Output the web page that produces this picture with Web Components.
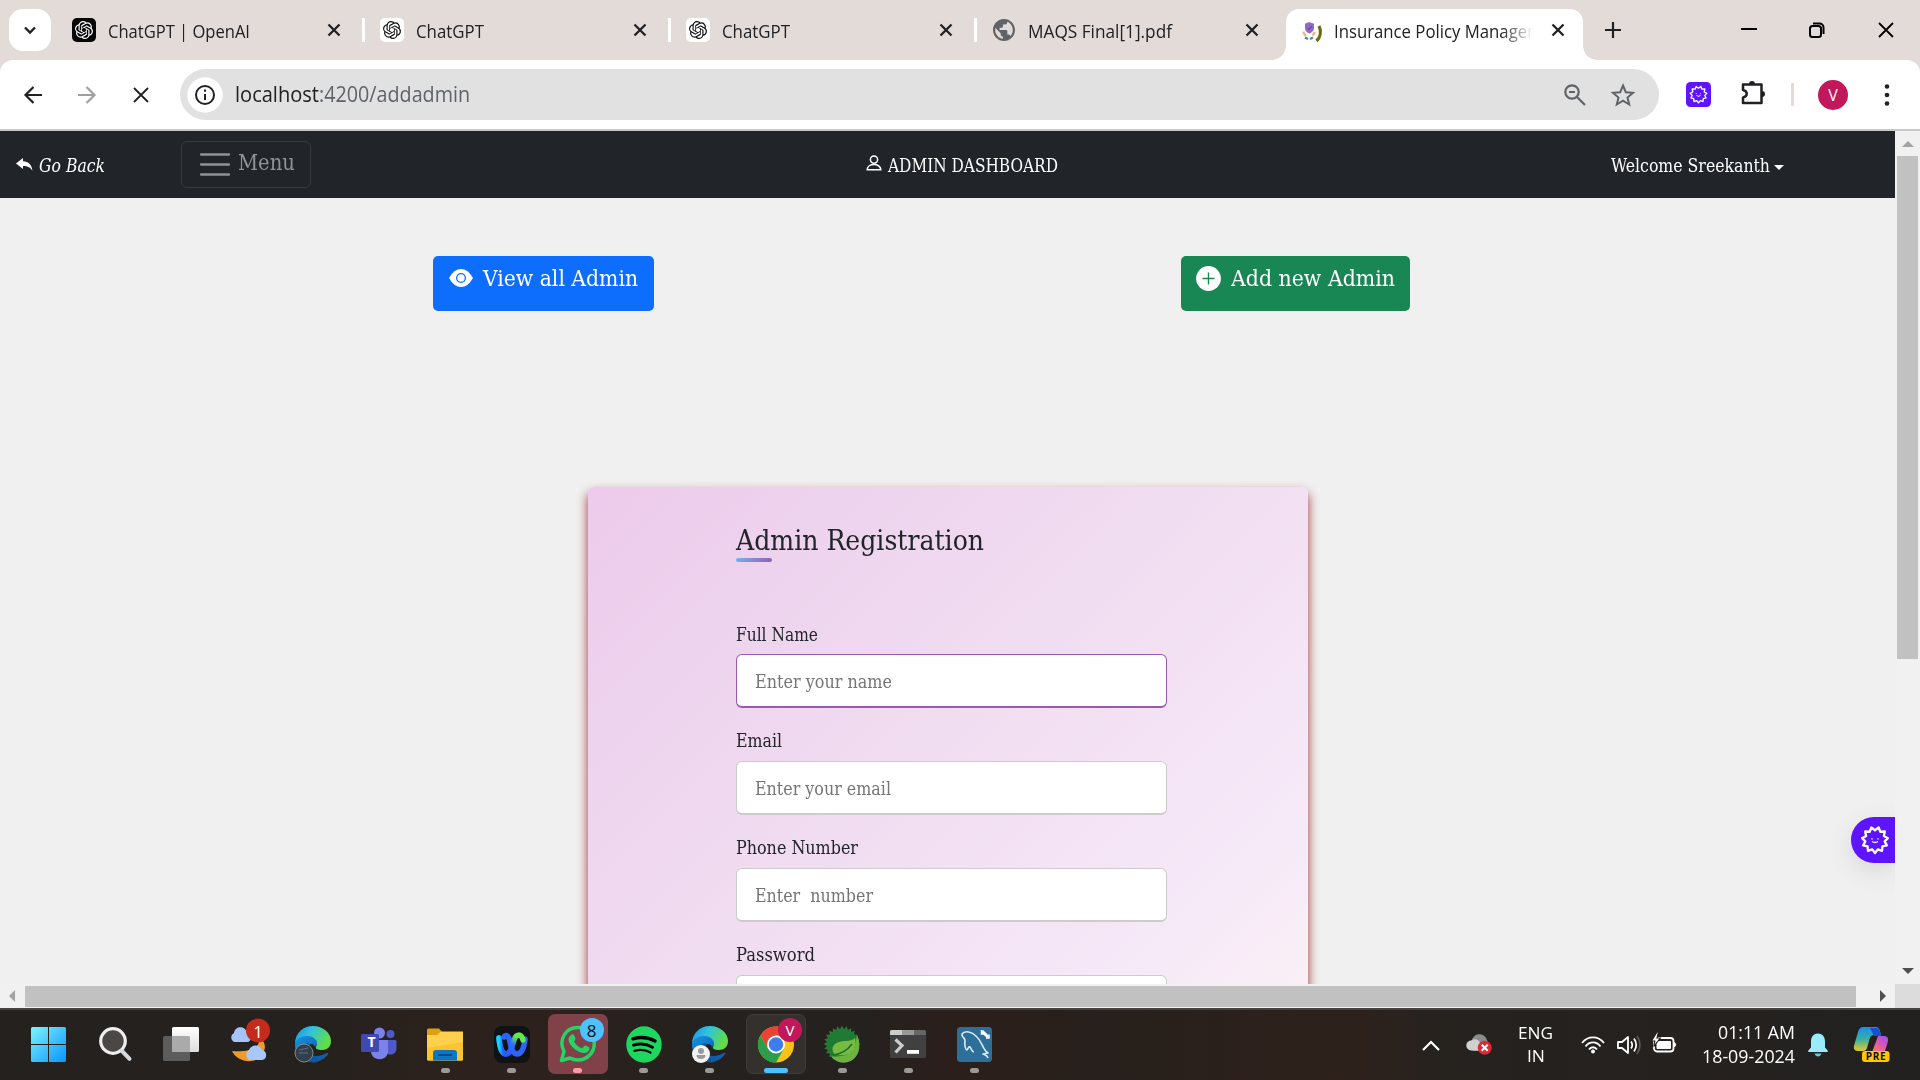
<!DOCTYPE html>
<html lang="en">
<head>
<meta charset="utf-8">
<title>Insurance Policy Management</title>
<style>
html,body{margin:0;padding:0;width:1920px;height:1080px;overflow:hidden;background:#f0f0f0}
desktop-screen{display:block}
</style>
</head>
<body>
<desktop-screen></desktop-screen>
<script>
const wavy = (n, cx, cy, ro, ri, rot = 0) => {
  const p = [];
  for (let i = 0; i < n * 2; i++) {
    const a = rot + Math.PI * i / n, r = i % 2 ? ri : ro;
    p.push((cx + r * Math.sin(a)).toFixed(2) + ' ' + (cy - r * Math.cos(a)).toFixed(2));
  }
  return 'M' + p.join('L') + 'Z';
};
const OPENAI = 'M22.2819 9.8211a5.9847 5.9847 0 0 0-.5157-4.9108 6.0462 6.0462 0 0 0-6.5098-2.9A6.0651 6.0651 0 0 0 4.9807 4.1818a5.9847 5.9847 0 0 0-3.9977 2.9 6.0462 6.0462 0 0 0 .7427 7.0966 5.98 5.98 0 0 0 .511 4.9107 6.051 6.051 0 0 0 6.5146 2.9001A5.9847 5.9847 0 0 0 13.2599 24a6.0557 6.0557 0 0 0 5.7718-4.2058 5.9894 5.9894 0 0 0 3.9977-2.9001 6.0557 6.0557 0 0 0-.7475-7.0729zm-9.022 12.6081a4.4755 4.4755 0 0 1-2.8764-1.0408l.1419-.0804 4.7783-2.7582a.7948.7948 0 0 0 .3927-.6813v-6.7369l2.02 1.1686a.071.071 0 0 1 .038.052v5.5826a4.504 4.504 0 0 1-4.4945 4.4944zm-9.6607-4.1254a4.4708 4.4708 0 0 1-.5346-3.0137l.142.0852 4.783 2.7582a.7712.7712 0 0 0 .7806 0l5.8428-3.3685v2.3324a.0804.0804 0 0 1-.0332.0615L9.74 19.9502a4.4992 4.4992 0 0 1-6.1408-1.6464zM2.3408 7.8956a4.485 4.485 0 0 1 2.3655-1.9728V11.6a.7664.7664 0 0 0 .3879.6765l5.8144 3.3543-2.0201 1.1685a.0757.0757 0 0 1-.071 0l-4.8303-2.7865A4.504 4.504 0 0 1 2.3408 7.872zm16.5963 3.8558L13.1038 8.364 15.1192 7.2a.0757.0757 0 0 1 .071 0l4.8303 2.7913a4.4944 4.4944 0 0 1-.6765 8.1042v-5.6772a.79.79 0 0 0-.407-.667zm2.0107-3.0231l-.142-.0852-4.7735-2.7818a.7759.7759 0 0 0-.7854 0L9.409 9.2297V6.8974a.0662.0662 0 0 1 .0284-.0615l4.8303-2.7866a4.4992 4.4992 0 0 1 6.6802 4.66zM8.3065 12.863l-2.02-1.1638a.0804.0804 0 0 1-.038-.0567V6.0742a4.4992 4.4992 0 0 1 7.3757-3.4537l-.142.0805L8.704 5.459a.7948.7948 0 0 0-.3927.6813zm1.0976-2.3654l2.602-1.4998 2.6069 1.4998v2.9994l-2.5974 1.4997-2.6067-1.4997Z';
const edge = `<defs><linearGradient id="ea" x1="0" y1="0" x2="1" y2=".4"><stop offset="0" stop-color="#1b8fe0"/><stop offset=".45" stop-color="#2fc2df"/><stop offset="1" stop-color="#62dc45"/></linearGradient><linearGradient id="eb" x1="0" y1="0" x2=".6" y2="1"><stop offset="0" stop-color="#1795e0"/><stop offset="1" stop-color="#0b60b8"/></linearGradient><linearGradient id="ec" x1="0" y1="0" x2="1" y2="0"><stop offset="0" stop-color="#0b4f97"/><stop offset="1" stop-color="#1763ae"/></linearGradient></defs>
<path fill="url(#eb)" d="M0 19C0 13 5 9 12 9c6 0 10 4 10 8 0 1-1 3-2 4-1-3-4-4-6-2-5 5 0 14 8 17-3 1-7 0-10-1C4 32 0 26 0 19z"/>
<path fill="url(#ec)" d="M14 18c-4 6 0 12 7 12 5 0 8-2 11-3 1 0 2 0 1 1-4 6-11 9-17 8-8-3-10-12-6-17 1-2 3-3 4-1z"/>
<path fill="url(#ea)" d="M0 18C0 7 8 0 18 0s18 7 18 15c0 6-4 9-9 9-4 0-7-1-6-3 3-5-1-11-9-11C6 10 1 13 0 18z"/>`;
const ICONS = {
  chevdown: [12, 8, '<path d="M1 1.500 6 6.500l5-5" fill="none" stroke="currentColor" stroke-width="2.400"/>'],
  x: [14, 14, '<path d="M1.500 1.500 12.500 12.500M12.500 1.500 1.500 12.500" fill="none" stroke="currentColor" stroke-width="2.300"/>'],
  winx: [16, 16, '<path d="M1 1 15 15M15 1 1 15" fill="none" stroke="currentColor" stroke-width="1.800"/>'],
  openaiDark: [24, 24, `<rect width="24" height="24" rx="5" fill="#050605"/><g transform="translate(3 3) scale(.75)"><path fill="#fff" d="${OPENAI}"/></g>`],
  openai: [24, 24, `<rect width="24" height="24" rx="5" fill="#fff"/><g transform="translate(3 3) scale(.75)"><path fill="#111" d="${OPENAI}"/></g>`],
  globe: [22, 22, '<g transform="translate(-2.2 -2.2) scale(1.1)"><path fill="#5f6368" d="M12 2C6.480 2 2 6.480 2 12s4.480 10 10 10 10-4.480 10-10S17.520 2 12 2zm-1 17.930c-3.950-.490-7-3.850-7-7.930 0-.620.080-1.210.210-1.790L9 15v1c0 1.100.900 2 2 2v1.930zm6.900-2.540c-.260-.810-1-1.390-1.900-1.390h-1v-3c0-.550-.450-1-1-1H8v-2h2c.550 0 1-.450 1-1V7h2c1.100 0 2-.900 2-2v-.410c2.930 1.190 5 4.060 5 7.410 0 2.080-.800 3.970-2.100 5.390z"/></g>'],
  policy: [20, 20, '<path fill="#9668c0" d="M7 0l5 1.700v4C12 9 9.500 10.500 7.500 11.400 5 10.500 3 9 3 5.700v-4z"/><path d="M5.500 6l1.500 1.700L9.700 4" stroke="#5b3c86" fill="none"/><path d="M1 10l3 4M13 10l-2.500 3.500" stroke="#f0b37d" stroke-width="2.200" fill="none"/><path d="M3 15.500l3 1.500M8 17l3-1.500" stroke="#3c8fa8" stroke-width="2.200"/><path d="M17 4c2.500 5 1.500 11-2.500 15" stroke="#6d6a12" stroke-width="3.200" fill="none"/>'],
  plus: [16, 16, '<path d="M8 0v16M0 8h16" stroke="currentColor" stroke-width="2.200"/>'],
  minus: [16, 2, '<path d="M0 1h16" stroke="currentColor" stroke-width="2"/>'],
  restore: [16, 16, '<rect x="1" y="4" width="11" height="11" rx="2.500" fill="none" stroke="currentColor" stroke-width="2"/><path d="M4 1.500h6.500a4 4 0 0 1 4 4V12" fill="none" stroke="currentColor" stroke-width="2"/>'],
  back: [18, 18, '<path d="M18 9H2M9.500 1 1.500 9l8 8" fill="none" stroke="currentColor" stroke-width="2.200"/>'],
  fwd: [18, 18, '<path d="M0 9h16M8.500 1l8 8-8 8" fill="none" stroke="currentColor" stroke-width="2.200"/>'],
  info: [36, 36, '<circle cx="18" cy="18" r="17.700" fill="#fff"/><circle cx="18" cy="18" r="9" fill="none" stroke="#202124" stroke-width="2"/><path d="M18 17v6M18 12.500v2.200" stroke="#202124" stroke-width="2"/>'],
  zoomout: [22, 22, '<circle cx="8" cy="8" r="6.700" fill="none" stroke="currentColor" stroke-width="2.200"/><path d="M13 13l8 8M5 8h6" stroke="currentColor" stroke-width="2.200"/>'],
  star: [24, 24, '<path d="M12 2.500l2.800 6.700 7.200.6-5.500 4.700 1.700 7-6.200-3.800-6.200 3.800 1.700-7L2 9.800l7.200-.6z" fill="none" stroke="currentColor" stroke-width="2"/>'],
  ext: [25, 25, `<rect width="25" height="25" rx="4.500" fill="#5f14ff"/><path d="${wavy(11, 12.5, 12.5, 8.4, 6.3, Math.PI / 11)}" fill="none" stroke="#fff" stroke-width="1.300" stroke-linejoin="round"/><path d="M10.300 11.300v.800M14.700 11.300v.800M10.500 13.500q2 1.600 4 0" fill="none" stroke="#fff"/>`],
  gearface: [28, 28, `<path d="${wavy(11, 14, 14, 13, 9.8, Math.PI / 11)}" fill="none" stroke="#fff" stroke-width="2.300" stroke-linejoin="round"/><path d="M11 12.300v1.200M17 12.300v1.200M11 15.500q3 2 6 0" fill="none" stroke="#fff" stroke-width="1.300"/>`],
  puzzle: [26, 26, '<path d="M2 4.500h18.500v18.500H2v-5.500c5-1 5-6.500 0-7.500z" fill="none" stroke="currentColor" stroke-width="2.500" stroke-linejoin="round"/><path d="M8 4a3 3 0 0 1 6 0zM21 11a3 3 0 0 1 0 6z" fill="currentColor"/>'],
  dots: [6, 22, '<circle cx="3" cy="2.500" r="2.300"/><circle cx="3" cy="11" r="2.300"/><circle cx="3" cy="19.500" r="2.300"/>'],
  reply: [17, 13, '<path fill="#fff" d="M0 5.500 7 0v3.300c5.500.2 8.500 3 9.500 9.500C14.500 9.200 12 8 7 7.900V11z"/>'],
  burger: [30, 23, '<path d="M1 1.500h28M1 11.500h28M1 21.500h28" stroke="#909294" stroke-width="2.300" stroke-linecap="round"/>'],
  user: [16, 16, '<circle cx="8" cy="4.600" r="3.600" fill="none" stroke="#fff" stroke-width="1.500"/><path d="M1.200 14.800c0-7 13.600-7 13.600 0z" fill="none" stroke="#fff" stroke-width="1.600"/>'],
  eye: [24, 18, '<path fill="#fff" d="M0 9Q5 0 12 0t12 9q-5 9-12 9T0 9z"/><circle cx="12" cy="9" r="5" fill="#0d6efd"/><circle cx="12" cy="9" r="3.700" fill="#fff"/>'],
  pluscircle: [25, 25, '<circle cx="12.500" cy="12.500" r="12.400" fill="#fff"/><path d="M12.500 6.500v12M6.500 12.500h12" stroke="#198754" stroke-width="1.400"/>'],
  start: [35, 35, '<defs><linearGradient id="s" x1="0" y1="0" x2="1" y2="1"><stop offset="0" stop-color="#7df3fd"/><stop offset="1" stop-color="#0a94ff"/></linearGradient></defs><path fill="url(#s)" d="M1.500 0H17v17H0V1.500Q0 0 1.500 0zM18 0h15.500Q35 0 35 1.500V17H18zM0 18h17v17H1.500Q0 35 0 33.500zM18 18h17v15.500q0 1.500-1.500 1.500H18z"/>'],
  search: [33, 34, '<circle cx="14" cy="14" r="12.300" fill="#4b4745" stroke="#eceeef" stroke-width="3.200"/><path d="M23 24l7.500 7.800" stroke="#d5dae0" stroke-width="4" stroke-linecap="round"/>'],
  taskview: [36, 34, '<defs><linearGradient id="tv" x1="0" y1="0" x2="0" y2="1"><stop offset="0" stop-color="#fff"/><stop offset="1" stop-color="#ddd"/></linearGradient></defs><rect x="0" y="9" width="27" height="25" rx="1.500" fill="#5c5c5c"/><rect x="9" y="0" width="27" height="25" rx="1.500" fill="url(#tv)"/><path fill="#aaa" d="M9 9h16.500q1.500 0 1.500 1.500V25H9z"/>'],
  weather: [40, 42, '<path d="M30 22c-2 8-14 10-27 9 5 11 24 15 31 2 3-5 2-9 0-12z" fill="#f09a2c"/><path d="M5 22a5 5 0 0 1 0-9c1-7 11-8 13 0 5 1 5 9 0 9z" fill="#a5c4f7"/><path d="M20 40a6 6 0 0 1 0-10c2-6 11-6 13 0 6 1 5 10 0 10z" fill="#a9c8fa"/><circle cx="29" cy="10.500" r="12" fill="#c42b1c"/>'],
  edge1: [36, 36, edge + '<circle cx="9" cy="27" r="9" fill="#30404d" stroke="#9a9a9a" stroke-width=".800"/><path d="M4 24l9-2M4 27h9" stroke="#5f7080" stroke-width="1"/>'],
  edge2: [36, 36, edge + '<circle cx="9" cy="28" r="9" fill="#f3f3f3"/><circle cx="9" cy="25" r="3" fill="#999"/><path d="M4.500 29h9q0 4-4.500 4t-4.500-4z" fill="#999"/>'],
  teams: [36, 34, '<circle cx="18.500" cy="6" r="5.500" fill="#7b83eb"/><circle cx="29.500" cy="7" r="4" fill="#5059c9"/><path d="M25 13h9q1.500 0 1.500 1.500V21c0 7-7 8-10.500 5z" fill="#5059c9"/><path d="M10 13h17v11c0 11-17 11-17 0z" fill="#7b83eb"/><rect y="7" width="18" height="18" rx="1.500" fill="#4049ae"/>'],
  folder: [36, 33, '<path d="M0 2q0-1.500 1.500-1.500H12L16 5v8H0z" fill="#dba20c"/><path d="M0 7h10l4-3.500h22V31q0 1.500-1.500 1.500h-33Q0 32.500 0 31z" fill="#ffd04b"/><path d="M0 20L36 14V31q0 1.500-1.500 1.500h-33Q0 32.500 0 31z" fill="#fbc52f"/><path d="M6 32.500V25q0-3 3-3h18q3 0 3 3v7.500z" fill="#0e74c4"/><path d="M11 27h14" stroke="#0a4883" stroke-width="1.800"/>'],
  webex: [36, 37, '<defs><linearGradient id="w1" x1="0" x2="1" y1="0" y2="0"><stop offset="0" stop-color="#11d8ff"/><stop offset=".7" stop-color="#275cff"/></linearGradient><linearGradient id="w2" x1="0" x2="1" y1="1" y2="0"><stop offset="0" stop-color="#244fff"/><stop offset=".55" stop-color="#3171ff"/><stop offset=".8" stop-color="#5fe94a"/></linearGradient></defs><rect width="36" height="37" rx="8" fill="#111213"/><path d="M31 13c-1 10-4 15-8 15s-6-6-7-12-4-8-6-5" stroke="#2f62ff" stroke-width="5.500" fill="none" stroke-linecap="round"/><path d="M5 12c1 10 3 16 7 16 5 0 6-8 8-14s7-7 9 0" stroke="url(#w2)" stroke-width="5.500" fill="none" stroke-linecap="round"/><path d="M5 12c.6 8 2.500 15 6 15.800" stroke="url(#w1)" stroke-width="5.500" fill="none" stroke-linecap="round"/>'],
  whatsapp: [38, 38, '<path d="M2.500 35.500l2.500-9C-1 14 7 2.500 19 2.500a16 16 0 0 1 0 32.500c-3 0-5.500-.6-8-2z" fill="none" stroke="#25d366" stroke-width="3.500" stroke-linejoin="round"/><path d="M12 10c1-1 2.500-1 3 0l1.500 3.500q.3 1-1.500 3c2 3.500 4.500 5.500 8 7l2.200-2.500q.8-.8 1.800-.3l3.300 1.800c1 .7-.3 5.500-5 5.500C18 28 9 19.500 9.500 14q.5-2.600 2.500-4z" fill="#25d366"/>'],
  spotify: [36, 37, '<ellipse cx="18" cy="18.500" rx="17.700" ry="18.200" fill="#1ed760"/><path d="M7 12.800q11.500-3.500 22 2.200" stroke="#000" stroke-width="3.500" fill="none" stroke-linecap="round"/><path d="M7.500 19.200q10-3 19 2" stroke="#000" stroke-width="2.900" fill="none" stroke-linecap="round"/><path d="M8.500 24.800q8.500-2.300 16 1.700" stroke="#000" stroke-width="2.300" fill="none" stroke-linecap="round"/>'],
  chrome: [36, 37, '<g transform="translate(18 18.500)"><circle r="18" fill="#fbc116"/><path d="M0-9H15.600A18 18 0 0 0-15.600-9L-7.800 4.500z" fill="#ea4335"/><path d="M-15.600-9A18 18 0 0 0 0 18L7.800 4.500H-7.800z" fill="#2b9e4b"/><circle r="9" fill="#fff"/><circle r="7.200" fill="#3c7df0"/></g>'],
  spring: [36, 38, `<path d="${wavy(24, 18, 19, 18.3, 15, 0)}" fill="#2e7d32"/><circle cx="19" cy="20" r="16" fill="#1e7a35"/><path d="M33 10c5 11 2 24-9 27-7 2-14-1-17-6 10 2 21-2 24-10z" fill="#6db33f"/><path d="M31 13c3 12-6 19-20 17C4 20 14 16 22 16q6 0 9-3z" fill="#77bc3f"/><path d="M9 30c8-1 14-4 19-11" stroke="#1e6d32" fill="none" stroke-width="1.500"/>`],
  terminal: [36, 28, '<rect width="36" height="28" rx="1.500" fill="#404040"/><path fill="#ccc" d="M1.500 0H12v5H0V1.500Q0 0 1.500 0z"/><path fill="#999" d="M12 0h12v5H12z"/><path fill="#666" d="M24 0h10.500Q36 0 36 1.500V5H24z"/><path d="M5.500 9.500l6.500 6-6.500 7" fill="none" stroke="#ccc" stroke-width="3.200"/><path fill="#fff" d="M17 20h12v3.800H17z"/>'],
  mysql: [35, 35, '<rect width="35" height="35" rx="3.500" fill="#2d6f99"/><path d="M31 31c-1-3-3-3-5-4l5-1c-6-4-5-11-12-17C15 5 8 3 5 7c-1 3 3 3 3 7-1 5 1 9 2 9s1-4 3-3c2 3 2 5 4 5" fill="none" stroke="#dcebf5" stroke-width="1.600" stroke-linejoin="round"/><path d="M25 4l6 6" stroke="#fff" stroke-width="3"/><path d="M24.500 3v4h3M32 7.500V11h-3" fill="none" stroke="#fff" stroke-width="1.500"/>'],
  chevup: [18, 11, '<path d="M1 10l8-8 8 8" fill="none" stroke="#fff" stroke-width="2.200"/>'],
  cloud: [26, 22, '<path d="M4 15a5 5 0 0 1 1-9c2-7 12-8 15 0l3 7-10 4H6z" fill="#8b8b8b"/><path d="M4 16.500a5 5 0 0 1 .5-10c4-3 8 0 9 3l3 2v5z" fill="#d0d0d0"/><circle cx="17.700" cy="13.700" r="7" fill="#dc2b36"/><path d="M14.700 10.700l6 6m0-6l-6 6" stroke="#fff" stroke-width="2"/>'],
  wifi: [24, 18, '<g fill="none" stroke="#fff" stroke-width="1.800"><path d="M1 7C7-.5 17-.5 23 7M4.500 10.500c4-5.500 11-5.500 15 0M8 13.500c2-3 6-3 8 0"/></g><circle cx="12" cy="15.500" r="2" fill="#fff"/>'],
  sound: [24, 20, '<path d="M1 7h4l6-5v16l-6-5H1z" fill="none" stroke="#fff" stroke-width="1.800" stroke-linejoin="round"/><path d="M14 6.500q2.500 3.500 0 7M17 3.500q4.500 6.500 0 13" fill="none" stroke="#fff" stroke-width="1.700"/><path d="M20 1q6 9 0 18" fill="none" stroke="#5b5755" stroke-width="1.700"/>'],
  battery: [26, 20, '<rect x="2" y="5" width="19.500" height="13.500" rx="3" fill="none" stroke="#fff" stroke-width="1.800"/><rect x="4.500" y="8" width="14.500" height="8" rx="1" fill="#fff"/><path d="M22.500 9.500q2.500 2.200 0 4.500z" fill="#fff" stroke="#fff"/><path d="M5 -1L-.5 8h3.300l-1 5.500 6.500-8.500H5l1.500-6z" fill="#fff" stroke="#25211e" stroke-width="1.200"/>'],
  bell: [20, 24, '<path d="M10 .5c5 0 7 4 7 8v6l2.700 3v1.500H.3V17.500L3 14.500v-6c0-4 2-8 7-8z" fill="#98ecfe"/><path d="M6.500 20.500h7q-1 3-3.500 3t-3.500-3z" fill="#5cc9ea"/>'],
  copilot: [36, 36, '<defs><linearGradient id="c1" x1="0" y1="0" x2="0" y2="1"><stop offset="0" stop-color="#1c8df0"/><stop offset=".5" stop-color="#37b1a0"/><stop offset="1" stop-color="#e8c72c"/></linearGradient><linearGradient id="c2" x1="1" y1="0" x2="0" y2="1"><stop offset="0" stop-color="#9450f5"/><stop offset=".5" stop-color="#e358a8"/><stop offset="1" stop-color="#fb8a4a"/></linearGradient></defs><path d="M9 0h13c3 0 4 3 5 8H20c-3 0-4 2-5 6l-2 7q-1 3-4 3H4c-4 0-5-3-3.500-7L4 5q1.500-5 5-5z" fill="url(#c1)"/><path d="M16 1h6c3 0 4 3 5 8h-7z" fill="#174fd1"/><path d="M23 9h7c4 0 5 3 3.500 7L31 24H13q3 0 4-4l2-7q1-4 4-4z" fill="url(#c2)"/><path d="M20 9h4L18.500 24H13z" fill="#25211e"/><rect x="8" y="24" width="27.500" height="11" rx="3" fill="#ffc60a"/>'],
};

const define = (name, render, after) => customElements.define(name, class extends HTMLElement {
  connectedCallback() {
    if (this.shadowRoot) return;
    this.attachShadow({ mode: 'open' }).innerHTML = render(this);
    if (after) after(this);
  }
});

// One line of text condensed or widened to the width in its "w" attribute.
define('fit-text', el => `<style>
:host{display:inline-block;width:${el.getAttribute('w')}px;white-space:pre;flex:none;line-height:1.2}
span{display:inline-block;transform-origin:0 50%}</style><span><slot></slot></span>`, el => {
  const s = el.shadowRoot.querySelector('span'), w = +el.getAttribute('w');
  s.style.transform = `scaleX(${(w / s.getBoundingClientRect().width).toFixed(4)})`;
});

define('ui-icon', el => {
  const [w, h, body] = ICONS[el.getAttribute('name')];
  return `<style>:host{display:block;flex:none;width:${w}px;height:${h}px}svg{display:block;overflow:visible}</style><svg width="${w}" height="${h}" viewBox="0 0 ${w} ${h}" fill="currentColor">${body}</svg>`;
});

define('browser-tab', el => `<style>
:host{display:flex;align-items:center;box-sizing:border-box;width:306px;height:42px;color:#202124;padding-left:15px;flex:none;font-size:18.500px}
:host([first]){padding-left:13px}
ui-icon.f{margin-right:12px}
.t{width:217px;height:28px;overflow:hidden;display:flex;align-items:center;padding-top:2px}
:host([first]) .t{width:219px}
:host([icon=globe]) .f{margin:0 13px 0 1px}
:host([active]){background:#fff;width:297px;height:51px;border-radius:13px 13px 0 0;padding:0 0 9px 16px;position:relative}
:host([active]) .t{width:199px;margin-right:18px;-webkit-mask-image:linear-gradient(90deg,#000 84%,transparent)}
:host([active]) ui-icon.f{margin:4px 12px 0 0}
.s{width:3px;height:24px;background:#fff;margin-left:auto}
:host([active]) .s,:host([icon=globe]) .s{display:none}
i{display:none}
:host([active]) i{display:block;position:absolute;bottom:0;width:14px;height:14px}
i.l{left:-14px;background:radial-gradient(circle at 0 0,transparent 13.500px,#fff 14px)}
i.r{right:-14px;background:radial-gradient(circle at 100% 0,transparent 13.500px,#fff 14px)}
</style><i class="l"></i><i class="r"></i><ui-icon class="f" name="${el.getAttribute('icon')}"></ui-icon><div class="t"><slot></slot></div><ui-icon name="x"></ui-icon><span class="s"></span>`);

define('tab-strip', () => `<style>
:host{display:flex;height:60px;background:#e3dbd8;align-items:flex-start;color:#202124}
.d{width:42px;height:42px;border-radius:14px;background:#fff;margin:9px 8px 0 9px;display:flex;align-items:center;justify-content:center}
browser-tab{margin-top:9px}
browser-tab[active]{margin-left:3px}
</style><div class="d"><ui-icon name="chevdown"></ui-icon></div>
<browser-tab first icon="openaiDark"><fit-text w="142">ChatGPT | OpenAI</fit-text></browser-tab>
<browser-tab icon="openai"><fit-text w="68">ChatGPT</fit-text></browser-tab>
<browser-tab icon="openai"><fit-text w="68">ChatGPT</fit-text></browser-tab>
<browser-tab icon="globe"><fit-text w="144">MAQS Final[1].pdf</fit-text></browser-tab>
<browser-tab icon="policy" active><fit-text w="200">Insurance Policy Manager</fit-text></browser-tab>
<ui-icon name="plus" style="margin:22px 0 0 22px"></ui-icon>
<ui-icon name="minus" style="margin:28px 0 0 120px;color:#000"></ui-icon>
<ui-icon name="restore" style="margin:22px 0 0 52px;color:#000"></ui-icon>
<ui-icon name="winx" style="margin:22px 0 0 53px;color:#000"></ui-icon>`);

define('address-bar', () => `<style>
:host{display:flex;height:69px;background:#fff;align-items:center;border-bottom:2px solid #c8c8c8;border-radius:13px 13px 0 0;color:#202124}
.o{width:1479px;height:51px;border-radius:26px;background:#e1e1e1;display:flex;align-items:center;box-sizing:border-box;padding-left:7px;margin-left:31px;font-size:21px;flex:none}
.o fit-text{margin-left:12px}.p{color:#5f6368}
.v{width:30px;height:30px;border-radius:50%;background:#c2185b;color:#fff;font-size:16px;display:flex;align-items:center;justify-content:center;margin-left:24px}
.s{width:3px;height:23px;background:#e3dbd8;margin-left:24px}
</style><ui-icon name="back" style="margin-left:24px"></ui-icon><ui-icon name="fwd" style="margin-left:36px;color:#a0a0a0"></ui-icon><ui-icon name="winx" style="margin-left:37px"></ui-icon>
<div class="o"><ui-icon name="info"></ui-icon><fit-text w="84">localhost</fit-text><fit-text w="151" class="p" style="margin:0">:4200/addadmin</fit-text>
<ui-icon name="zoomout" style="margin-left:1094px;color:#5f6368"></ui-icon><ui-icon name="star" style="margin-left:25px;color:#5f6368"></ui-icon></div>
<ui-icon name="ext" style="margin-left:27px"></ui-icon><ui-icon name="puzzle" style="margin:-4px 0 0 30px"></ui-icon><span class="s"></span><div class="v">V</div><ui-icon name="dots" style="margin-left:36px"></ui-icon>`);

define('admin-navbar', () => `<style>
:host{display:flex;height:67px;background:#212529;align-items:center;color:#fff;font-size:17.800px;flex:none}
.m{width:130px;height:47px;box-sizing:border-box;border:1px solid #373b3e;border-radius:6px;display:flex;align-items:center;padding-left:18px;margin-left:76px;color:#909294;font-size:22.500px;flex:none}
.n{padding-top:2px}
.c{border:5px solid transparent;border-top:5px solid #fff;border-bottom:0;margin:5px 0 0 4px}
</style><ui-icon name="reply" style="margin-left:16px"></ui-icon><fit-text class="n" w="66" style="margin-left:6px;font-style:italic">Go Back</fit-text>
<div class="m"><ui-icon name="burger"></ui-icon><fit-text w="57" style="margin:-5px 0 0 8px">Menu</fit-text></div>
<ui-icon name="user" style="margin:-3px 0 0 555px"></ui-icon><fit-text class="n" w="170" style="margin-left:6px">ADMIN DASHBOARD</fit-text>
<fit-text class="n" w="159" style="margin-left:553px">Welcome Sreekanth</fit-text><span class="c"></span>`);

define('action-button', el => `<style>
:host{display:flex;box-sizing:border-box;height:55px;border-radius:5px;color:#fff;font-size:22.500px;padding-top:8px;flex:none}
</style><slot></slot>`);

define('form-field', el => `<style>
:host{display:block;height:107px;flex:none;font-size:17.800px;color:#212529}
.l{height:26px;line-height:26px;display:block;margin-bottom:7px}
:host([focused]) .l{line-height:28px}
.b{height:54px;box-sizing:border-box;border:1px solid #ccc;border-bottom-width:2px;border-radius:6px;background:#fff;padding-left:18px;display:flex;align-items:center;color:#757575;padding-top:2px}
:host([focused]) .b{border-color:#9b59b6}
</style><fit-text class="l" w="${el.getAttribute('lw')}">${el.getAttribute('label')}</fit-text><div class="b"><slot></slot></div>`);

define('registration-card', () => `<style>
:host{display:block;width:720px;height:900px;box-sizing:border-box;border-radius:6px;padding:34px 141px 0 148px;background:linear-gradient(135deg,#edcaeb 0%,#eed6ef 22%,#f2dff2 42%,#f6e9f8 64%,#fbf0f6 76%);box-shadow:0 6px 11px rgba(150,30,30,.9);color:#212529;flex:none}
.h{font-size:28.500px;line-height:39px;height:37px;display:block}
.u{width:36px;height:4px;border-radius:2px;background:linear-gradient(135deg,#71b7e6,#9b59b6);margin-bottom:59px}
</style><fit-text class="h" w="248">Admin Registration</fit-text><div class="u"></div>
<form-field focused label="Full Name" lw="82"><fit-text w="137">Enter your name</fit-text></form-field>
<form-field label="Email" lw="46"><fit-text w="136">Enter your email</fit-text></form-field>
<form-field label="Phone Number" lw="122"><fit-text w="118">Enter  number</fit-text></form-field>
<form-field label="Password" lw="79"></form-field>`);

define('chat-widget', () => `<style>
:host{display:flex;position:absolute;right:0;top:686px;width:44px;height:46px;box-sizing:border-box;border-radius:23px 0 0 23px;background:#5f14ff;align-items:center;padding-left:10px;box-shadow:0 8px 26px rgba(0,0,0,.1);overflow:hidden}
</style><ui-icon name="gearface"></ui-icon>`);

define('web-page', () => `<style>
:host{display:flex;flex-direction:column;position:relative;width:1895px;height:853px;overflow:hidden;background:#f0f0f0;font-family:"DejaVu Serif Condensed","DejaVu Serif",serif}
.a{display:flex;margin:58px 0 176px 433px}
</style><admin-navbar></admin-navbar><div class="a">
<action-button style="width:221px;background:#0d6efd"><ui-icon name="eye" style="margin:5px 0 0 16px"></ui-icon><fit-text w="155" style="margin:1px 0 0 10px">View all Admin</fit-text></action-button>
<action-button style="width:229px;background:#198754;margin-left:527px"><ui-icon name="pluscircle" style="margin:2px 0 0 15px"></ui-icon><fit-text w="164" style="margin:1px 0 0 10px">Add new Admin</fit-text></action-button></div>
<registration-card style="margin-left:588px"></registration-card><chat-widget></chat-widget>`);

define('v-scroll', () => `<style>
:host{display:flex;flex-direction:column;align-items:center;width:25px;height:853px;background:#f1f1f1}
b{border:6px solid transparent}.u{border-bottom:6px solid #a3a3a3;border-top:0;margin:10px 0 9px}
.d{border-top:6px solid #505050;border-bottom:0;margin-top:309px}.t{width:21px;height:503px;background:#c1c1c1}
</style><b class="u"></b><div class="t"></div><b class="d"></b>`);

define('h-scroll', () => `<style>
:host{display:flex;align-items:center;height:24px;background:#f1f1f1}
b{border:6px solid transparent}.l{border-right:6px solid #a3a3a3;border-left:0;margin:0 10px 0 9px}
.r{border-left:6px solid #505050;border-right:0;margin:0 9px 0 24px}.t{width:1831px;height:21px;background:#c1c1c1}.c{width:25px;height:24px;background:#dcdcdc}
</style><b class="l"></b><div class="t"></div><b class="r"></b><div class="c"></div>`);

define('task-app', el => {
  const b = el.getAttribute('badge');
  return `<style>
:host{display:flex;flex-direction:column;align-items:center;justify-content:center;position:relative;width:60px;height:60px;box-sizing:border-box;margin-right:6.100px;border-radius:7px;flex:none}
:host([alert]){background:#804248}:host([current]){background:#34302d;border:1px solid #413d3a}
.i{position:absolute;bottom:1px;left:25.500px;width:9px;height:5px;border-radius:3px;background:#9c9a98}
:host([alert]) .i{background:#ff99a4}:host([current]) .i{background:#4cc2ff;width:24px;left:17px;bottom:0}
.b{position:absolute;left:32px;top:5px;width:24px;height:24px;border-radius:50%;display:flex;align-items:center;justify-content:center;font-size:17px}
.b.n8{background:#4cc2ff;color:#111;top:4px}.b.nV{background:#c2185b;color:#fff;font-size:15px;top:3px;left:31px}
.b.n1{left:17px;top:-1px;color:#fff}
.t{position:absolute;left:18px;top:18px;color:#fff;font-weight:700;font-size:14px;line-height:20px}
.w{position:absolute;left:12px;top:6px;width:40px;height:42px}
</style>${b === '1' ? `<div class="w"><ui-icon name="weather"></ui-icon><span class="b n1">1</span></div>` : `<ui-icon name="${el.getAttribute('icon')}"></ui-icon>`}${el.hasAttribute('run') ? '<span class="i"></span>' : ''}${b && b !== '1' ? `<span class="b n${b}">${b}</span>` : ''}${el.getAttribute('icon') === 'teams' ? '<span class="t">T</span>' : ''}`;
});

define('task-bar', () => `<style>
:host{display:flex;height:72px;box-sizing:border-box;border-top:2px solid #454241;background:linear-gradient(90deg,#24211f 0,#25211e 300px,#2c211c 450px,#2c211d 560px,#25211e 700px,#24211f 860px,#2c1f1b 960px,#27201c 1100px,#2e211b 1340px,#26221e 1440px,#232120 1920px);color:#fff;align-items:center}
.a{display:flex;padding:0 0 2px 19px;width:985px;flex:none}
.l{display:flex;flex-direction:column;align-items:center;font-size:17px;gap:3px;margin-left:25px}
.l fit-text,.d fit-text{line-height:20px}
.l,.d{margin-top:-2px}
.d{display:flex;flex-direction:column;align-items:flex-end;font-size:17.500px;gap:4px;margin-left:24px}
.c{position:relative;margin-left:26px;font-size:10px}
.c span{position:absolute;left:8px;top:24px;width:28px;text-align:center;color:#111;font-weight:700;line-height:11px;letter-spacing:.7px}
</style><div class="a">
<task-app icon="start" style="margin:0 7px 0 -1px"></task-app><task-app icon="search"></task-app><task-app icon="taskview"></task-app><task-app icon="weather" badge="1"></task-app>
<task-app icon="edge1"></task-app><task-app icon="teams"></task-app><task-app icon="folder" run></task-app><task-app icon="webex" run></task-app>
<task-app icon="whatsapp" alert run badge="8"></task-app><task-app icon="spotify" run></task-app><task-app icon="edge2" run></task-app><task-app icon="chrome" current run badge="V"></task-app>
<task-app icon="spring" run></task-app><task-app icon="terminal" run></task-app><task-app icon="mysql" run></task-app></div>
<ui-icon name="chevup" style="margin-left:418px"></ui-icon><ui-icon name="cloud" style="margin-left:27px"></ui-icon>
<div class="l"><fit-text w="35">ENG</fit-text><fit-text w="18">IN</fit-text></div>
<ui-icon name="wifi" style="margin-left:28px"></ui-icon><ui-icon name="sound" style="margin-left:12px"></ui-icon><ui-icon name="battery" style="margin:-4px 0 0 11px"></ui-icon>
<div class="d"><fit-text w="77">01:11 AM</fit-text><fit-text w="93">18-09-2024</fit-text></div>
<ui-icon name="bell" style="margin-left:13px"></ui-icon><div class="c"><ui-icon name="copilot"></ui-icon><span>PRE</span></div>`);

define('desktop-screen', () => `<style>
:host{display:flex;flex-direction:column;width:1920px;height:1080px;overflow:hidden;font-family:"Open Sans","Noto Sans",sans-serif}
.top{background:#e3dbd8}.mid{display:flex}
</style><tab-strip></tab-strip><div class="top"><address-bar></address-bar></div><div class="mid"><web-page></web-page><v-scroll></v-scroll></div><h-scroll></h-scroll><task-bar></task-bar>`);
</script>
</body>
</html>
